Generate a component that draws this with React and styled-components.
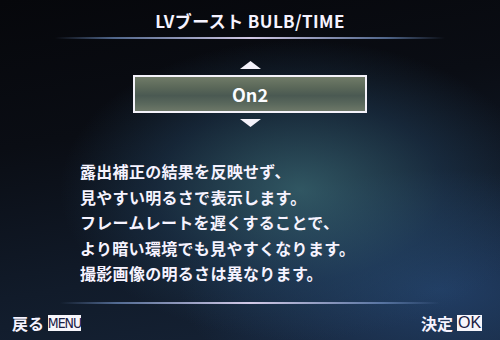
import React from "react";
import styled, { createGlobalStyle } from "styled-components";

const Global = createGlobalStyle`
  html, body { margin: 0; padding: 0; background: #07090e; }
  #root { width: 500px; height: 340px; }
`;

const Screen = styled.div`
  width: 500px;
  height: 340px;
  box-sizing: border-box;
  display: flex;
  flex-direction: column;
  overflow: hidden;
  font-family: "Noto Sans CJK JP", "Noto Sans", sans-serif;
  color: #f6f3ff;
  background:
    radial-gradient(ellipse 240px 150px at 300px 190px, rgba(60, 108, 120, 0.75), rgba(38, 72, 102, 0.4) 60%, rgba(0,0,0,0) 100%),
    radial-gradient(ellipse 260px 120px at 440px 290px, rgba(38, 72, 118, 0.75), rgba(0,0,0,0) 100%),
    linear-gradient(170deg, #06070b 0%, #0a0d14 35%, #111b2a 70%, #162438 100%);
`;

const Header = styled.div`
  height: 37px;
  display: flex;
  align-items: center;
  justify-content: center;
  padding-top: 3px;
  box-sizing: border-box;
`;

const Title = styled.h1`
  margin: 0;
  font-size: 17px;
  font-weight: 700;
  letter-spacing: 0.4px;
  line-height: 1;
`;

const Rule = styled.div`
  height: 2px;
  margin: 0 ${(p) => p.$inset}px;
  background: linear-gradient(90deg,
    rgba(90, 120, 170, 0) 0%,
    rgba(110, 140, 190, 0.7) 15%,
    rgba(220, 210, 240, 0.95) 50%,
    rgba(110, 140, 190, 0.7) 85%,
    rgba(90, 120, 170, 0) 100%);
`;

const Picker = styled.div`
  margin-top: 22px;
  display: flex;
  flex-direction: column;
  align-items: center;
  gap: 6px;
`;

const ValueBox = styled.div`
  width: 234px;
  height: 38px;
  box-sizing: border-box;
  border: 2px solid #f4f2fa;
  display: flex;
  align-items: center;
  justify-content: center;
  background: linear-gradient(180deg, #707b68 0%, #5b6859 30%, #4a5952 55%, #5b695d 80%, #6d7868 100%);
  font-size: 18px;
  font-weight: 700;
  color: #fbfbff;
`;

const Arrow = ({ dir }) => (
  <svg width="21" height="8" viewBox="0 0 21 8" style={{ display: "block" }}>
    {dir === "up" ? (
      <polygon points="10.5,0 21,8 0,8" fill="#f4f2fa" />
    ) : (
      <polygon points="0,0 21,0 10.5,8" fill="#f4f2fa" />
    )}
  </svg>
);

const Description = styled.div`
  margin: 32px 0 0 80px;
  font-size: 16px;
  font-weight: 700;
  line-height: 25.5px;
  letter-spacing: 0.3px;
`;

const Line = styled.div`
  white-space: nowrap;
`;

const Footer = styled.div`
  margin-top: auto;
  display: flex;
  flex-direction: column;
`;

const FooterRow = styled.div`
  height: 36px;
  display: flex;
  align-items: center;
  justify-content: space-between;
  padding: 2px 18px 0 12px;
  box-sizing: border-box;
`;

const Action = styled.div`
  display: flex;
  align-items: center;
  gap: 4px;
  font-size: 16px;
  font-weight: 700;
  line-height: 1;
`;

const Key = styled.span`
  display: inline-flex;
  align-items: center;
  justify-content: center;
  background: #f7f6fb;
  color: #1b2145;
  height: 16px;
  width: ${(p) => p.$w}px;
  font-family: ${(p) => (p.$narrow ? '"DejaVu Sans Condensed", "Liberation Sans Narrow", "DejaVu Sans", sans-serif' : '"Liberation Sans", Arial, sans-serif')};
  font-stretch: ${(p) => (p.$narrow ? "condensed" : "normal")};
  font-size: ${(p) => p.$size}px;
  font-weight: 400;
  letter-spacing: ${(p) => (p.$narrow ? "-1px" : "0")};
  line-height: 1;
`;

export default function App() {
  return (
    <>
      <Global />
      <Screen>
        <Header>
          <Title>LVブースト BULB/TIME</Title>
        </Header>
        <Rule $inset={55} />
        <Picker>
          <Arrow dir="up" />
          <ValueBox>On2</ValueBox>
          <Arrow dir="down" />
        </Picker>
        <Description>
          <Line>露出補正の結果を反映せず、</Line>
          <Line>見やすい明るさで表示します。</Line>
          <Line>フレームレートを遅くすることで、</Line>
          <Line>より暗い環境でも見やすくなります。</Line>
          <Line>撮影画像の明るさは異なります。</Line>
        </Description>
        <Footer>
          <Rule $inset={60} />
          <FooterRow>
            <Action>
              戻る<Key $w={33} $size={14} $narrow>MENU</Key>
            </Action>
            <Action>
              決定<Key $w={25} $size={16}>OK</Key>
            </Action>
          </FooterRow>
        </Footer>
      </Screen>
    </>
  );
}
